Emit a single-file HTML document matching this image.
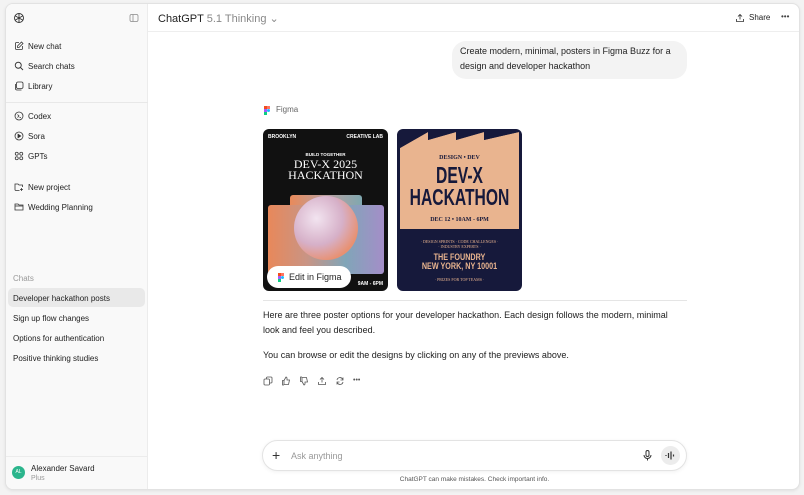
<!DOCTYPE html>
<html><head><meta charset="utf-8"><style>
*{box-sizing:border-box;margin:0;padding:0}
body{width:804px;height:495px;background:#f3f3f3;font-family:"Liberation Sans",sans-serif;color:#222;position:relative;overflow:hidden}
.win{position:absolute;left:5px;top:3px;width:795px;height:487px;background:#fff;border:1px solid #e2e2e2;border-radius:8px;overflow:hidden;box-shadow:0 1px 3px rgba(0,0,0,.08)}
.side{position:absolute;left:0;top:0;width:142px;height:100%;background:#f9f9f9;border-right:1px solid #ececec}
.a{position:absolute;white-space:nowrap}
.si{font-size:8px;color:#222}
.ic{position:absolute}
svg{display:block}
</style></head><body>
<div class="win">
 <div class="side">
  <svg class="ic" style="left:7px;top:8px" width="12" height="12" viewBox="0 0 24 24" fill="none" stroke="#333" stroke-width="1.8"><circle cx="12" cy="12" r="9"/><path d="M12 3v18M4 7.5l16 9M4 16.5l16-9"/></svg>
  <svg class="ic" style="left:123px;top:9px" width="10" height="10" viewBox="0 0 20 20" fill="none" stroke="#888" stroke-width="1.5"><rect x="2" y="3" width="16" height="14" rx="3"/><path d="M8 3v14"/></svg>
  <svg class="ic" style="left:8px;top:37px" width="10" height="10" viewBox="0 0 20 20" fill="none" stroke="#333" stroke-width="1.6"><path d="M10 3H5a2 2 0 00-2 2v10a2 2 0 002 2h10a2 2 0 002-2v-5"/><path d="M15 2l3 3-8 8H7v-3z"/></svg>
  <div class="a si" style="left:22px;top:38px">New chat</div>
  <svg class="ic" style="left:8px;top:57px" width="10" height="10" viewBox="0 0 20 20" fill="none" stroke="#333" stroke-width="1.8"><circle cx="8.5" cy="8.5" r="6"/><path d="M13 13l5 5"/></svg>
  <div class="a si" style="left:22px;top:58px">Search chats</div>
  <svg class="ic" style="left:8px;top:77px" width="10" height="10" viewBox="0 0 20 20" fill="none" stroke="#333" stroke-width="1.6"><rect x="5" y="2" width="13" height="13" rx="3"/><path d="M3 6v9a3 3 0 003 3h9"/></svg>
  <div class="a si" style="left:22px;top:78px">Library</div>
  <div class="a" style="left:0;top:98px;width:142px;border-top:1px solid #e8e8e8"></div>
  <svg class="ic" style="left:8px;top:107px" width="10" height="10" viewBox="0 0 20 20" fill="none" stroke="#333" stroke-width="1.6"><circle cx="10" cy="10" r="8"/><path d="M7 7l3 3-3 3M11 13h3"/></svg>
  <div class="a si" style="left:22px;top:108px">Codex</div>
  <svg class="ic" style="left:8px;top:127px" width="10" height="10" viewBox="0 0 20 20" fill="none" stroke="#333" stroke-width="1.6"><circle cx="10" cy="10" r="8"/><path d="M8 6.5v7l5.5-3.5z" fill="#333"/></svg>
  <div class="a si" style="left:22px;top:128px">Sora</div>
  <svg class="ic" style="left:8px;top:147px" width="10" height="10" viewBox="0 0 20 20" fill="none" stroke="#333" stroke-width="1.6"><circle cx="5.5" cy="5.5" r="3"/><circle cx="14.5" cy="5.5" r="3"/><circle cx="5.5" cy="14.5" r="3"/><circle cx="14.5" cy="14.5" r="3"/></svg>
  <div class="a si" style="left:22px;top:148px">GPTs</div>
  <svg class="ic" style="left:8px;top:178px" width="10" height="10" viewBox="0 0 20 20" fill="none" stroke="#333" stroke-width="1.6"><path d="M11 17H4a2 2 0 01-2-2V4h6l2 2h7v4"/><path d="M15 12v6M12 15h6"/></svg>
  <div class="a si" style="left:22px;top:179px">New project</div>
  <svg class="ic" style="left:8px;top:198px" width="10" height="10" viewBox="0 0 20 20" fill="none" stroke="#333" stroke-width="1.6"><path d="M2 4h6l2 2h8v10H2z"/><path d="M2 8h16"/></svg>
  <div class="a si" style="left:22px;top:199px">Wedding Planning</div>
  <div class="a" style="left:7px;top:270px;font-size:8px;color:#999">Chats</div>
  <div class="a" style="left:2px;top:284px;width:137px;height:19px;background:#e9e9e9;border-radius:5px"></div>
  <div class="a si" style="left:7px;top:290px">Developer hackathon posts</div>
  <div class="a si" style="left:7px;top:310px">Sign up flow changes</div>
  <div class="a si" style="left:7px;top:330px">Options for authentication</div>
  <div class="a si" style="left:7px;top:350px">Positive thinking studies</div>
  <div class="a" style="left:0;top:452px;width:142px;border-top:1px solid #ececec"></div>
  <div class="a" style="left:6px;top:462px;width:13px;height:13px;border-radius:50%;background:#2bb58c;color:#fff;font-size:5px;line-height:13px;text-align:center">AL</div>
  <div class="a" style="left:25px;top:460px;font-size:8px;color:#222">Alexander Savard</div>
  <div class="a" style="left:25px;top:471px;font-size:7px;color:#999">Plus</div>
 </div>
 <div class="a" style="left:142px;top:27px;width:653px;border-top:1px solid #eee"></div>
 <div class="a" style="left:152px;top:8px;font-size:11px;color:#222">ChatGPT <span style="color:#888">5.1 Thinking ⌄</span></div>
 <svg class="ic" style="left:729px;top:9px" width="10" height="10" viewBox="0 0 20 20" fill="none" stroke="#333" stroke-width="1.7"><path d="M10 13V3M6 7l4-4 4 4M3 12v5h14v-5"/></svg>
 <div class="a" style="left:743px;top:9px;font-size:8px;color:#222">Share</div>
 <div class="a" style="left:775px;top:8px;font-size:8px;color:#444;letter-spacing:0px">•••</div>
 <div class="a" style="left:446px;top:37px;width:235px;height:38px;background:#f3f3f3;border-radius:14px"></div>
 <div class="a" style="left:454px;top:40px;font-size:9px;line-height:15px;color:#222">Create modern, minimal, posters in Figma Buzz for a<br>design and developer hackathon</div>
 <svg class="ic" style="left:258px;top:102px" width="6" height="9" viewBox="0 0 6 9"><rect x="0" y="0" width="3" height="3" fill="#f24e1e"/><rect x="3" y="0" width="3" height="3" fill="#ff7262"/><rect x="0" y="3" width="3" height="3" fill="#a259ff"/><circle cx="4.5" cy="4.5" r="1.5" fill="#1abcfe"/><rect x="0" y="6" width="3" height="3" fill="#0acf83"/></svg>
 <div class="a" style="left:270px;top:101px;font-size:8px;color:#666">Figma</div>
 <!-- poster 1 -->
 <div class="a" style="left:257px;top:125px;width:125px;height:162px;background:#111;border-radius:6px;overflow:hidden">
  <div class="a" style="left:5px;top:5px;font-size:5px;font-weight:bold;color:#fff">BROOKLYN</div>
  <div class="a" style="right:5px;top:5px;font-size:5px;font-weight:bold;color:#fff">CREATIVE LAB</div>
  <div class="a" style="left:0;width:125px;top:23px;text-align:center;font-size:4.5px;font-weight:bold;color:#fff">BUILD TOGETHER</div>
  <div class="a" style="left:0;width:125px;top:30px;text-align:center;font-family:'Liberation Serif',serif;font-size:12px;line-height:11px;color:#fff">DEV-X 2025<br>HACKATHON</div>
  <div class="a" style="left:27px;top:66px;width:72px;height:12px;background:linear-gradient(90deg,#e98a5a,#b9a0a0,#7fa8b0);border-radius:3px 3px 0 0"></div>
  <div class="a" style="left:5px;top:76px;width:116px;height:69px;background:linear-gradient(90deg,#e8885a,#c99484,#80a5b8,#a48ec8);border-radius:3px"></div>
  <div class="a" style="left:31px;top:67px;width:64px;height:64px;border-radius:50%;background:radial-gradient(circle at 35% 35%,#f2e4f0,#d6b0c8 45%,#e89070 75%,#c8a0b8)"></div>
  <div class="a" style="right:5px;top:152px;font-size:5px;font-weight:bold;color:#fff">9AM - 6PM</div>
  <div class="a" style="left:4px;top:137px;width:84px;height:22px;background:#fff;border-radius:11px"></div>
  <svg class="ic" style="left:15px;top:144px" width="6" height="9" viewBox="0 0 6 9"><rect x="0" y="0" width="3" height="3" fill="#f24e1e"/><rect x="3" y="0" width="3" height="3" fill="#ff7262"/><rect x="0" y="3" width="3" height="3" fill="#a259ff"/><circle cx="4.5" cy="4.5" r="1.5" fill="#1abcfe"/><rect x="0" y="6" width="3" height="3" fill="#0acf83"/></svg>
  <div class="a" style="left:26px;top:143px;font-size:9px;color:#222">Edit in Figma</div>
 </div>
 <!-- poster 2 -->
 <div class="a" style="left:391px;top:125px;width:125px;height:162px;background:#16193b;border-radius:6px;overflow:hidden">
  <svg class="a" style="left:3px;top:3px" width="119" height="97" viewBox="0 0 119 97"><path d="M0 16L28 0V8L56 0V8L84 0V8L119 0V97H0z" fill="#e9b48f"/><path d="M28 0L0 16V0zM56 0L28 8V0zM84 0L56 8V0zM119 0L84 8V0z" fill="#16193b"/></svg>
  <div class="a" style="left:0;width:125px;top:26px;text-align:center;font-family:'Liberation Serif',serif;font-weight:bold;font-size:6px;color:#16193b">DESIGN • DEV</div>
  <div class="a" style="left:-20px;width:165px;top:35px;text-align:center;font-family:'Liberation Sans Narrow','Liberation Sans',sans-serif;font-weight:bold;font-size:23px;line-height:22px;color:#16193b;transform:scaleX(.68)">DEV-X<br>HACKATHON</div>
  <div class="a" style="left:0;width:125px;top:88px;text-align:center;font-family:'Liberation Serif',serif;font-weight:bold;font-size:6px;color:#16193b">DEC 12 • 10AM - 6PM</div>
  <div class="a" style="left:0;width:125px;top:110px;text-align:center;font-family:'Liberation Serif',serif;font-size:4px;line-height:5px;color:#e9b48f">· DESIGN SPRINTS · CODE CHALLENGES ·<br>· INDUSTRY EXPERTS ·</div>
  <div class="a" style="left:-10px;width:145px;top:124px;text-align:center;font-family:'Liberation Sans Narrow','Liberation Sans',sans-serif;font-weight:bold;font-size:9px;line-height:9px;color:#e9b48f;transform:scaleX(.8)">THE FOUNDRY<br>NEW YORK, NY 10001</div>
  <div class="a" style="left:0;width:125px;top:148px;text-align:center;font-family:'Liberation Serif',serif;font-size:4px;color:#e9b48f">· PRIZES FOR TOP TEAMS ·</div>
 </div>
 <div class="a" style="left:257px;top:296px;width:424px;border-top:1px solid #e5e5e5"></div>
 <div class="a" style="left:257px;top:304px;font-size:9px;line-height:15px;color:#222">Here are three poster options for your developer hackathon. Each design follows the modern, minimal<br>look and feel you described.</div>
 <div class="a" style="left:257px;top:344px;font-size:9px;line-height:15px;color:#222">You can browse or edit the designs by clicking on any of the previews above.</div>
 <div class="a" style="left:257px;top:372px;display:flex;gap:8px">
  <svg width="10" height="10" viewBox="0 0 20 20" fill="none" stroke="#555" stroke-width="1.6"><rect x="2" y="6" width="11" height="12" rx="2"/><path d="M7 6V4a2 2 0 012-2h7a2 2 0 012 2v8a2 2 0 01-2 2h-3"/></svg>
  <svg width="10" height="10" viewBox="0 0 20 20" fill="none" stroke="#555" stroke-width="1.6"><path d="M6 9l4-7c2 0 2 2 2 3v3h5l-2 9H6zM6 9H3v9h3"/></svg>
  <svg width="10" height="10" viewBox="0 0 20 20" fill="none" stroke="#555" stroke-width="1.6"><path d="M6 11l4 7c2 0 2-2 2-3v-3h5l-2-9H6zM6 11H3V2h3"/></svg>
  <svg width="10" height="10" viewBox="0 0 20 20" fill="none" stroke="#555" stroke-width="1.6"><path d="M10 13V3M6 7l4-4 4 4M3 12v5h14v-5"/></svg>
  <svg width="10" height="10" viewBox="0 0 20 20" fill="none" stroke="#555" stroke-width="1.6"><path d="M4 8a6 6 0 0111-2l1 2M16 12a6 6 0 01-11 2l-1-2M16 3v5h-5M4 17v-5h5"/></svg>
  <div style="font-size:7px;color:#555;line-height:10px">•••</div>
 </div>
 <div class="a" style="left:256px;top:436px;width:425px;height:31px;border:1px solid #e3e3e3;border-radius:16px;background:#fff;box-shadow:0 1px 4px rgba(0,0,0,.06)"></div>
 <div class="a" style="left:266px;top:443px;font-size:14px;color:#333">+</div>
 <div class="a" style="left:285px;top:447px;font-size:9px;color:#999">Ask anything</div>
 <svg class="ic" style="left:637px;top:446px" width="9" height="11" viewBox="0 0 18 22" fill="none" stroke="#333" stroke-width="2"><rect x="6" y="1" width="6" height="12" rx="3"/><path d="M2 10a7 7 0 0014 0M9 17v4"/></svg>
 <div class="a" style="left:655px;top:442px;width:19px;height:19px;border-radius:50%;background:#ececec"></div>
 <svg class="ic" style="left:659px;top:447px" width="10" height="9" viewBox="0 0 10 9" stroke="#333" stroke-width="1.2"><path d="M1 4v1M3.5 2v5M6 0.5v8M8.5 3.5v2"/></svg>
 <div class="a" style="left:256px;width:425px;top:472px;text-align:center;font-size:6.5px;color:#555">ChatGPT can make mistakes. Check important info.</div>
</div>
</body></html>
